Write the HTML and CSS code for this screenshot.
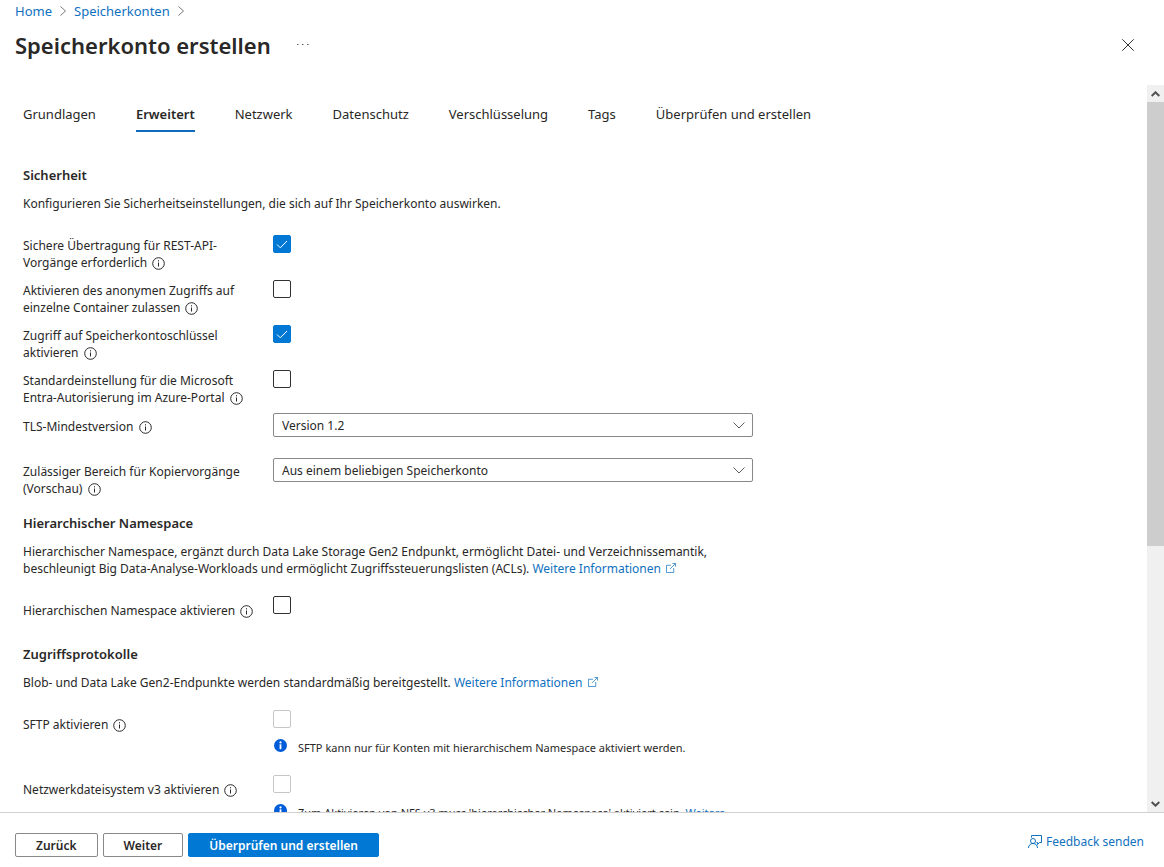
FILE: index.html
```html
<!DOCTYPE html>
<html lang="de">
<head>
    <meta charset="UTF-8">
    <meta name="viewport" content="width=device-width, initial-scale=1.0">
    <title>Speicherkonto erstellen</title>
    <link rel="stylesheet" href="styles.css">
</head>
<body>

<!-- Icons -->
<svg class="sprite" aria-hidden="true">
    <symbol id="info" viewBox="0 0 13 13">
        <circle cx="6.5" cy="6.5" r="5.8" fill="none" stroke="currentColor"/>
        <path d="M6.5 5.5v4M6.5 3.2v1.2" stroke="currentColor" fill="none"/>
    </symbol>
    <symbol id="info-filled" viewBox="0 0 13 13">
        <circle cx="6.5" cy="6.5" r="6.5" fill="#015cda"/>
        <rect x="5.6" y="5.3" width="1.8" height="4.9" fill="#fff"/>
        <circle cx="6.5" cy="3.4" r="1.1" fill="#fff"/>
    </symbol>
    <symbol id="external" viewBox="0 0 11 11">
        <path d="M5.5 2.5h-5v8h8v-5M4.5 6.5l6-6M7 .5h3.5V4" stroke="currentColor" stroke-width=".8" fill="none"/>
    </symbol>
    <symbol id="crumb" viewBox="0 0 6 10">
        <path d="M.5 .5l5 4.5-5 4.5" stroke="currentColor" fill="none"/>
    </symbol>
</svg>

<header class="header">
    <nav class="breadcrumb" aria-label="Breadcrumb">
        <a href="#">Home</a>
        <svg class="crumb"><use href="#crumb"/></svg>
        <a href="#">Speicherkonten</a>
        <svg class="crumb"><use href="#crumb"/></svg>
    </nav>
    <div class="title-row">
        <h1>Speicherkonto erstellen</h1>
        <button class="more" type="button" aria-label="Mehr">
            <svg viewBox="0 0 12 2" width="12" height="2"><path d="M0 .5h1.5M5 .5h1.5M10 .5h1.5" stroke="#605e5c"/></svg>
        </button>
        <button class="close" type="button" aria-label="Schließen">
            <svg viewBox="0 0 12 12" width="12" height="12"><path d="M.3 .3l11.4 11.4M11.7 .3L.3 11.7" stroke="#323130" fill="none"/></svg>
        </button>
    </div>
</header>

<div class="scroll-area">
    <main class="content">
        <nav class="tabs" aria-label="Schritte">
            <a href="#">Grundlagen</a>
            <a href="#" class="active">Erweitert</a>
            <a href="#">Netzwerk</a>
            <a href="#">Datenschutz</a>
            <a href="#">Verschlüsselung</a>
            <a href="#">Tags</a>
            <a href="#">Überprüfen und erstellen</a>
        </nav>

        <section>
            <h2>Sicherheit</h2>
            <p>Konfigurieren Sie Sicherheitseinstellungen, die sich auf Ihr Speicherkonto auswirken.</p>
            <div class="checks">
                <div class="row">
                    <label for="rest">Sichere Übertragung für REST-API-Vorgänge erforderlich <svg class="info"><use href="#info"/></svg></label>
                    <input type="checkbox" id="rest" checked>
                </div>
                <div class="row">
                    <label for="anonym">Aktivieren des anonymen Zugriffs auf einzelne Container zulassen <svg class="info"><use href="#info"/></svg></label>
                    <input type="checkbox" id="anonym">
                </div>
                <div class="row">
                    <label for="schluessel">Zugriff auf Speicherkontoschlüssel aktivieren <svg class="info"><use href="#info"/></svg></label>
                    <input type="checkbox" id="schluessel" checked>
                </div>
                <div class="row">
                    <label for="entra">Standardeinstellung für die Microsoft Entra-Autorisierung im Azure-Portal <svg class="info"><use href="#info"/></svg></label>
                    <input type="checkbox" id="entra">
                </div>
            </div>
            <div class="row row-select">
                <label for="tls">TLS-Mindestversion <svg class="info"><use href="#info"/></svg></label>
                <select id="tls">
                    <option>Version 1.2</option>
                </select>
            </div>
            <div class="row row-select">
                <label for="kopie">Zulässiger Bereich für Kopiervorgänge (Vorschau) <svg class="info"><use href="#info"/></svg></label>
                <select id="kopie">
                    <option>Aus einem beliebigen Speicherkonto</option>
                </select>
            </div>
        </section>

        <section>
            <h2>Hierarchischer Namespace</h2>
            <p>Hierarchischer Namespace, ergänzt durch Data Lake Storage Gen2 Endpunkt, ermöglicht Datei- und Verzeichnissemantik, beschleunigt Big Data-Analyse-Workloads und ermöglicht Zugriffssteuerungslisten (ACLs). <a href="#">Weitere Informationen <svg class="external"><use href="#external"/></svg></a></p>
            <div class="row row-single">
                <label for="hns">Hierarchischen Namespace aktivieren <svg class="info"><use href="#info"/></svg></label>
                <input type="checkbox" id="hns">
            </div>
        </section>

        <section>
            <h2>Zugriffsprotokolle</h2>
            <p>Blob- und Data Lake Gen2-Endpunkte werden standardmäßig bereitgestellt. <a href="#">Weitere Informationen <svg class="external"><use href="#external"/></svg></a></p>
            <div class="row row-single">
                <label for="sftp">SFTP aktivieren <svg class="info"><use href="#info"/></svg></label>
                <div class="field">
                    <input type="checkbox" id="sftp" disabled>
                    <div class="note">
                        <svg class="note-icon"><use href="#info-filled"/></svg>
                        <span>SFTP kann nur für Konten mit hierarchischem Namespace aktiviert werden.</span>
                    </div>
                </div>
            </div>
            <div class="row row-single">
                <label for="nfs">Netzwerkdateisystem v3 aktivieren <svg class="info"><use href="#info"/></svg></label>
                <div class="field">
                    <input type="checkbox" id="nfs" disabled>
                    <div class="note">
                        <svg class="note-icon"><use href="#info-filled"/></svg>
                        <span>Zum Aktivieren von NFS v3 muss 'hierarchischer Namespace' aktiviert sein. <a href="#">Weitere</a></span>
                    </div>
                </div>
            </div>
        </section>
    </main>

    <div class="scrollbar">
        <button type="button" aria-label="Nach oben"><svg viewBox="0 0 9 6" width="9" height="6"><path d="M.7 5l3.8-3.7L8.3 5" stroke="#505050" stroke-width="2" fill="none"/></svg></button>
        <div class="track"><div class="thumb"></div></div>
        <button type="button" aria-label="Nach unten"><svg viewBox="0 0 9 6" width="9" height="6"><path d="M.7 1l3.8 3.7L8.3 1" stroke="#505050" stroke-width="2" fill="none"/></svg></button>
    </div>
</div>

<footer class="footer">
    <button class="btn" type="button">Zurück</button>
    <button class="btn" type="button">Weiter</button>
    <button class="btn btn-primary" type="button">Überprüfen und erstellen</button>
    <a class="feedback" href="#">
        <svg viewBox="0 0 14 14" width="14" height="14" fill="none" stroke="currentColor">
            <path d="M3.5 2.5v-2h10v7h-2l-2 2v-2h-1"/>
            <circle cx="5" cy="6" r="2.5"/>
            <path d="M.5 13c0-2.800 2-4.500 4.500-4.500S9.500 10.200 9.500 13"/>
        </svg>
        Feedback senden
    </a>
</footer>

</body>
</html>
```

FILE: styles.css
```css
* {
    box-sizing: border-box;
}

body {
    margin: 0;
    height: 100vh;
    display: flex;
    flex-direction: column;
    overflow: hidden;
    font-family: "Segoe UI", "Noto Sans", sans-serif;
    font-size: 12px;
    line-height: 17px;
    color: #292827;
    background: #fff;
}

a {
    color: #1071c0;
    text-decoration: none;
}

button, select {
    font-family: inherit;
    color: inherit;
}

.sprite {
    display: none;
}

.header {
    padding: 2px 15px 0;
    height: 85px;
    flex: none;
}

.breadcrumb {
    display: flex;
    align-items: center;
    gap: 8px;
    font-size: 13px;
    line-height: 18px;
}

.crumb {
    width: 6px;
    height: 10px;
    color: #797775;
}

.title-row {
    display: flex;
    align-items: center;
    margin-top: 9px;
}

h1 {
    margin: 0;
    font-size: 22px;
    line-height: 32px;
    font-weight: 600;
}

.more, .close {
    display: flex;
    align-items: center;
    justify-content: center;
    width: 24px;
    height: 24px;
    padding: 0;
    border: none;
    background: none;
}

.more {
    margin-left: 20px;
}

.close {
    margin-left: auto;
    margin-right: 9px;
}

.scroll-area {
    flex: 1;
    min-height: 0;
    display: flex;
}

.content {
    flex: 1;
    overflow: hidden;
    padding: 17px 23px 0;
}

.tabs {
    display: flex;
    gap: 40px;
    margin-bottom: 35px;
    font-size: 13px;
    line-height: 24px;
}

.tabs a {
    color: inherit;
    padding-bottom: 4px;
    border-bottom: 2px solid transparent;
}

.tabs .active {
    font-weight: 600;
    border-color: #0f6cbd;
}

section {
    margin-bottom: 18px;
}

h2 {
    margin: 0 0 11px;
    font-size: 13px;
    line-height: 17px;
    font-weight: 600;
}

p {
    max-width: 730px;
    margin: 0 0 19px;
}

.checks {
    display: flex;
    flex-direction: column;
    gap: 9px;
    margin: 23px 0 7px;
}

.row {
    display: grid;
    grid-template-columns: 250px minmax(0, 480px);
    align-items: start;
}

.row label {
    padding: 2px 10px 0 0;
}

.info {
    width: 13px;
    height: 13px;
    margin-left: 2px;
    vertical-align: -3px;
}

.external {
    width: 10px;
    height: 10px;
    margin-left: 2px;
}

input[type="checkbox"] {
    appearance: none;
    display: block;
    width: 18px;
    height: 18px;
    margin: 0;
    border: 1px solid #323130;
    border-radius: 2px;
    background: #fff;
}

input[type="checkbox"]:checked {
    border-color: #0078d4;
    background: #0078d4 url("data:image/svg+xml,%3Csvg xmlns='http://www.w3.org/2000/svg' viewBox='0 0 12 9'%3E%3Cpath d='M1 4.500l3.300 3.300L11 1' fill='none' stroke='white'/%3E%3C/svg%3E") center / 12px 9px no-repeat;
}

input[type="checkbox"]:disabled {
    border-color: #c8c6c4;
}

select {
    appearance: none;
    width: 100%;
    height: 24px;
    padding: 0 30px 0 8px;
    border: 1px solid #8a8886;
    border-radius: 2px;
    font-size: 12px;
    background: #fff url("data:image/svg+xml,%3Csvg xmlns='http://www.w3.org/2000/svg' viewBox='0 0 12 7'%3E%3Cpath d='M.5 .5L6 6 11.500 .5' fill='none' stroke='%23605e5c'/%3E%3C/svg%3E") right 7px center / 12px 7px no-repeat;
}

.row-select {
    min-height: 35px;
    margin-bottom: 10px;
}

.row-select label {
    padding-top: 5px;
}

.row-single {
    min-height: 31px;
    margin-bottom: 19px;
}

.row-single label {
    padding-top: 6px;
}

.note {
    display: flex;
    gap: 11px;
    margin-top: 11px;
    padding-left: 1px;
    font-size: 11px;
}

.note-icon {
    flex: none;
    width: 13px;
    height: 13px;
}

.scrollbar {
    display: flex;
    flex-direction: column;
    width: 17px;
    background: #f0f0f0;
}

.scrollbar button {
    display: flex;
    align-items: center;
    justify-content: center;
    height: 17px;
    padding: 0;
    border: none;
    background: none;
}

.track {
    flex: 1;
}

.thumb {
    height: 64%;
    background: #cdcdcd;
}

.footer {
    display: flex;
    align-items: center;
    gap: 5px;
    flex: none;
    padding: 20px 20px 10px 15px;
    border-top: 1px solid #d2d0ce;
}

.btn {
    height: 24px;
    padding: 0 20px;
    border: 1px solid #8a8886;
    border-radius: 2px;
    background: #fff;
    font-size: 12px;
    font-weight: 600;
}

.btn-primary {
    border-color: #0078d4;
    background: #0078d4;
    color: #fff;
}

.feedback {
    display: flex;
    align-items: center;
    align-self: flex-start;
    gap: 4px;
    margin-left: auto;
}
```
